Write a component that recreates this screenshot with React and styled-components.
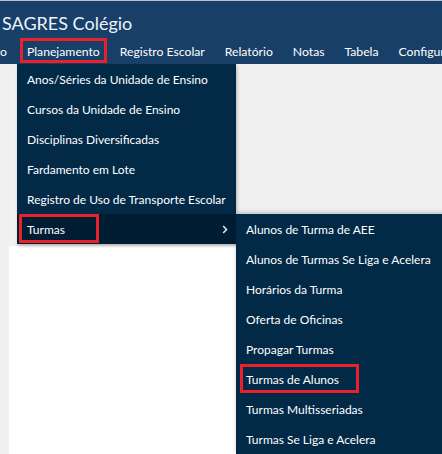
import React from "react";
import styled, { createGlobalStyle, css } from "styled-components";

const Global = createGlobalStyle`
  html, body { margin: 0; padding: 0; background: #f0f0f0; }
  body { font-family: "Lato", "Noto Sans", sans-serif; overflow: hidden; }
  * { box-sizing: border-box; }
`;

const FONT = `"Lato", "Noto Sans", sans-serif`;

const Page = styled.div`
  width: 442px;
  height: 454px;
  display: flex;
  flex-direction: column;
  background: #f0f0f0;
  font-family: ${FONT};
  color: #ffffff;
  overflow: hidden;
`;

const TopLine = styled.div`
  height: 1px;
  background: #b8bfc8;
`;

const Header = styled.div`
  height: 37px;
  background: #173f68;
  display: flex;
  align-items: center;
  padding: 6px 0 0 2px;
  font-size: 18px;
  color: #eef3f8;
  white-space: nowrap;
`;

const NavBar = styled.nav`
  height: 26px;
  background: #173f68;
  display: flex;
  align-items: center;
  margin-left: -10px;
  white-space: nowrap;
  overflow: hidden;
`;

const NavItem = styled.div`
  position: relative;
  flex-shrink: 0;
  height: 26px;
  display: flex;
  align-items: center;
  padding: 0 10px;
  font-size: 12.2px;
  color: #ffffff;
  ${(p) =>
    p.$marked &&
    css`
      &::after {
        content: "";
        position: absolute;
        left: 3px;
        right: 3px;
        top: 0;
        bottom: 1px;
        border: 3px solid #e8212b;
      }
    `}
`;

const Content = styled.div`
  position: relative;
  flex: 1;
  padding: 182px 0 0 9px;
`;

const WhitePanel = styled.div`
  width: 228px;
  height: 100%;
  background: #ffffff;
`;

const Menu = styled.div`
  position: absolute;
  top: 0;
  left: 17px;
  width: 219px;
  background: #022a47;
  box-shadow: 1px 2px 3px rgba(0, 0, 0, 0.25);
  display: flex;
  flex-direction: column;
`;

const SubMenu = styled.div`
  position: absolute;
  top: 0;
  left: 100%;
  width: 210px;
  background: #022a47;
  box-shadow: 0 -2px 4px rgba(0, 0, 0, 0.18);
  display: flex;
  flex-direction: column;
`;

const Item = styled.div`
  position: relative;
  height: 30px;
  display: flex;
  align-items: center;
  padding: 1px 0 0 10px;
  font-size: 12px;
  color: #ffffff;
  white-space: nowrap;
  background: ${(p) => (p.$active ? "#011d33" : "transparent")};
  ${(p) =>
    p.$marked &&
    css`
      &::before {
        content: "";
        position: absolute;
        left: ${p.$boxLeft}px;
        width: ${p.$boxWidth}px;
        top: 0;
        bottom: 1px;
        border: 3px solid #e8212b;
      }
    `}
`;

const Chevron = styled.svg`
  position: absolute;
  right: 8px;
  top: 11px;
`;

const mainItems = [
  "Anos/Séries da Unidade de Ensino",
  "Cursos da Unidade de Ensino",
  "Disciplinas Diversificadas",
  "Fardamento em Lote",
  "Registro de Uso de Transporte Escolar",
];

const subItems = [
  "Alunos de Turma de AEE",
  "Alunos de Turmas Se Liga e Acelera",
  "Horários da Turma",
  "Oferta de Oficinas",
  "Propagar Turmas",
  "Turmas de Alunos",
  "Turmas Multisseriadas",
  "Turmas Se Liga e Acelera",
];

export default function App() {
  return (
    <>
      <Global />
      <Page>
        <TopLine />
        <Header>SAGRES Colégio</Header>
        <NavBar>
          <NavItem>o</NavItem>
          <NavItem $marked>Planejamento</NavItem>
          <NavItem>Registro Escolar</NavItem>
          <NavItem>Relatório</NavItem>
          <NavItem>Notas</NavItem>
          <NavItem>Tabela</NavItem>
          <NavItem>Configura</NavItem>
        </NavBar>
        <Content>
          <WhitePanel />
          <Menu>
            {mainItems.map((t) => (
              <Item key={t}>{t}</Item>
            ))}
            <Item $active $marked $boxLeft={2} $boxWidth={74}>
              Turmas
              <Chevron width="6" height="9" viewBox="0 0 6 9">
                <path d="M1.2 1 L4.5 4.5 L1.2 8" fill="none" stroke="#dfe6ee" strokeWidth="1.6" />
              </Chevron>
              <SubMenu>
                {subItems.map((t) => (
                  <Item
                    key={t}
                    $sub
                    $marked={t === "Turmas de Alunos"}
                    $boxLeft={4}
                    $boxWidth={113}
                  >
                    {t}
                  </Item>
                ))}
              </SubMenu>
            </Item>
          </Menu>
        </Content>
      </Page>
    </>
  );
}
